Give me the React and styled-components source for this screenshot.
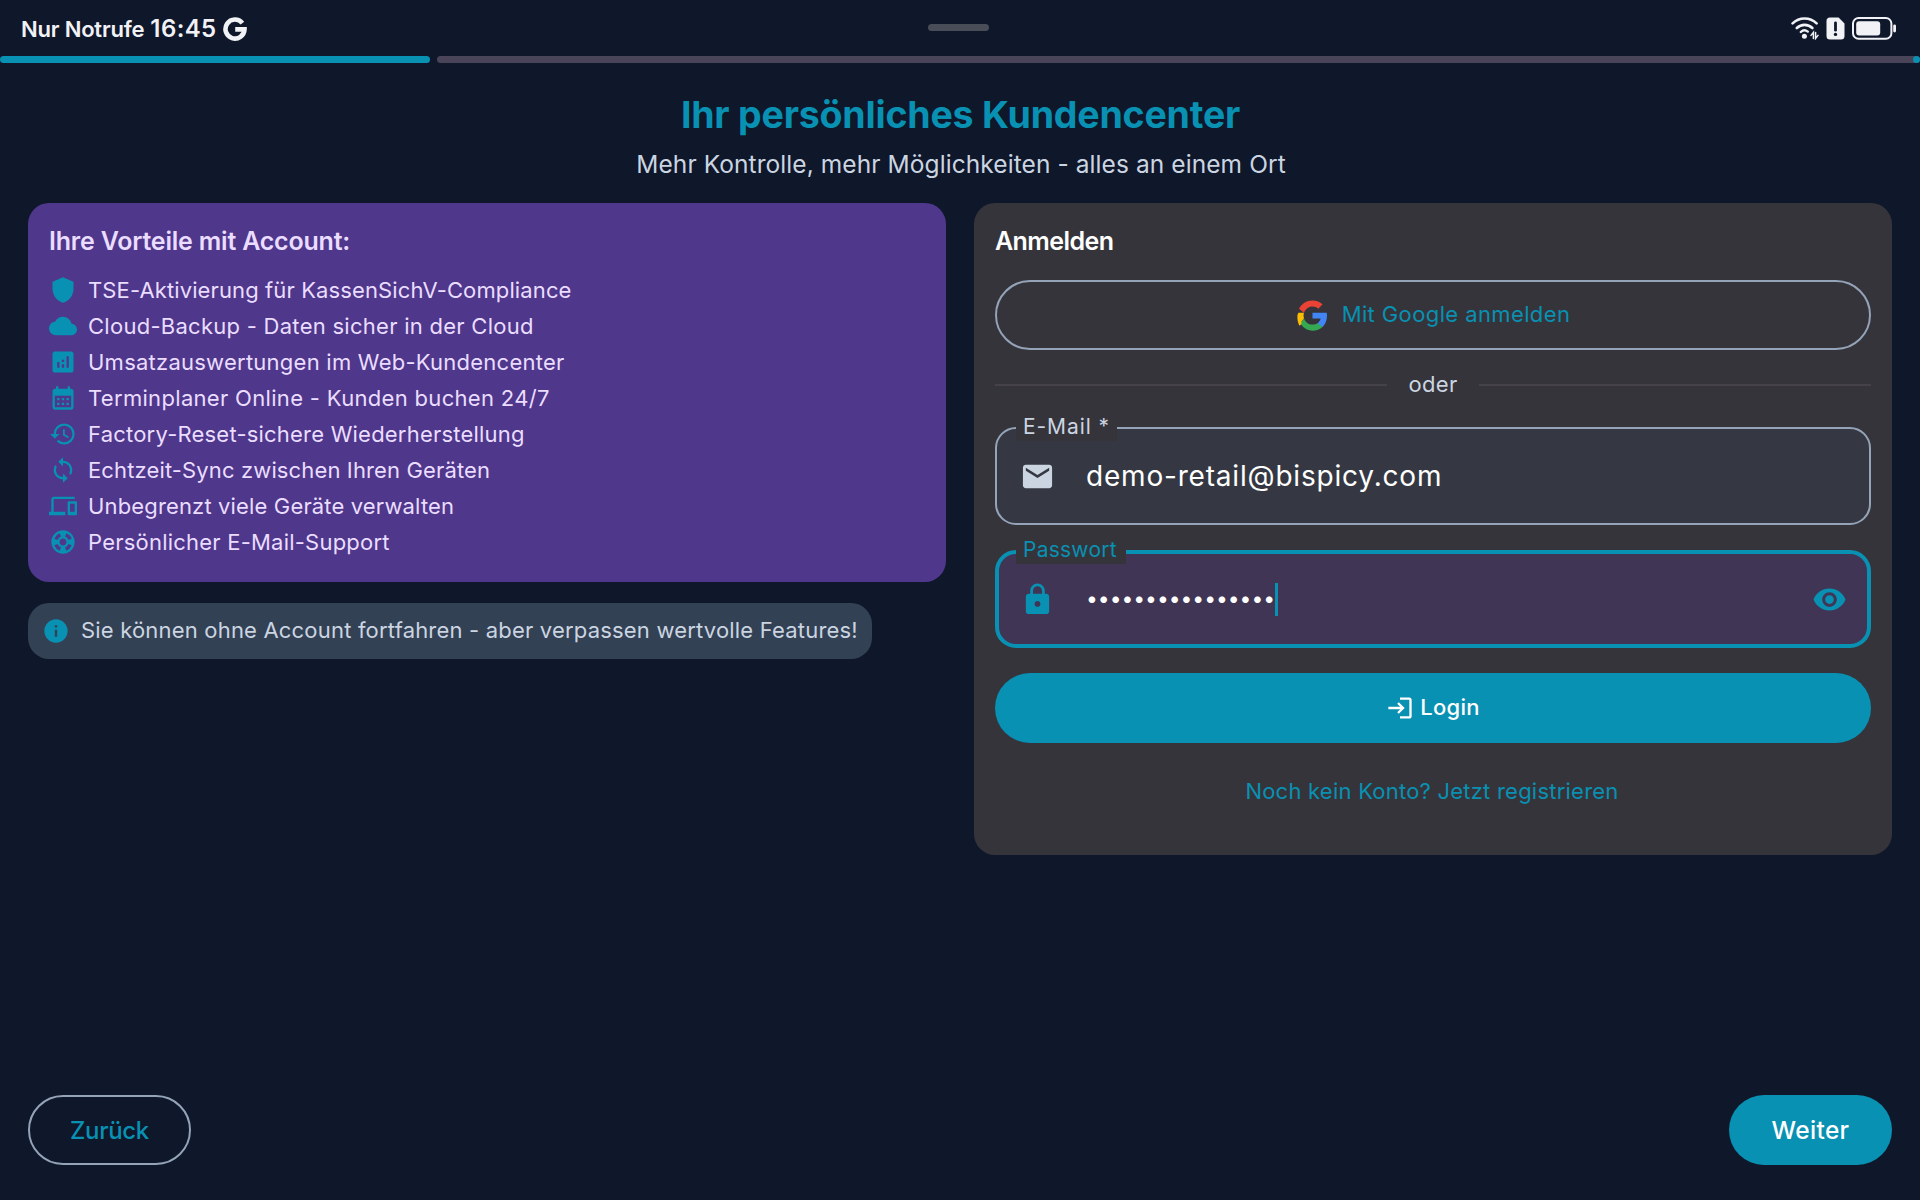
import React from "react";
import styled, { createGlobalStyle } from "styled-components";
import {
  MdShield,
  MdCloud,
  MdAnalytics,
  MdCalendarMonth,
  MdHistory,
  MdSync,
  MdDevices,
  MdSupport,
  MdInfo,
  MdEmail,
  MdLock,
  MdVisibility,
  MdLogin,
} from "react-icons/md";

const color = {
  bg: "#0f172a",
  primary: "#0891b2",
  purple: "#4f378b",
  onPurple: "#eaddff",
  card: "#36343b",
  outline: "#94a3b8",
  soft: "#cbd5e1",
  info: "#334155",
  track: "#4a4458",
};

const GlobalStyle = createGlobalStyle`
  * { box-sizing: border-box; }
  body {
    margin: 0;
    background: ${color.bg};
    font-family: Inter, "Noto Sans", sans-serif;
    -webkit-font-smoothing: antialiased;
  }
  svg { display: block; flex: none; }
`;

const Screen = styled.div`
  display: flex;
  flex-direction: column;
  height: 1200px;
  background: ${color.bg};
`;

/* Status bar */
const StatusBar = styled.header`
  display: grid;
  grid-template-columns: 1fr auto 1fr;
  align-items: center;
  height: 56px;
  padding: 0 23px 0 21px;
  color: #f1f2f6;
`;
const StatusLeft = styled.div`
  display: flex;
  align-items: center;
  gap: 6px;
  padding-top: 1px;
  font-weight: 600;
  line-height: 30px;
  white-space: nowrap;
`;
const Carrier = styled.span`
  font-size: 22px;
  letter-spacing: -0.2px;
`;
const Clock = styled.span`
  font-size: 24px;
  letter-spacing: 0.4px;
`;
const Grip = styled.div`
  width: 61px;
  height: 7px;
  margin: 0 2px 2px 0;
  border-radius: 4px;
  background: #484d57;
`;
const StatusRight = styled.div`
  display: flex;
  justify-content: flex-end;
  align-items: center;
  gap: 7px;
`;

/* Progress */
const Progress = styled.div`
  display: flex;
  gap: 7px;
  height: 7px;
`;
const ProgressDone = styled.div`
  width: 430px;
  border-radius: 4px;
  background: ${color.primary};
`;
const ProgressRest = styled.div`
  display: flex;
  justify-content: flex-end;
  flex: 1;
  border-radius: 4px;
  background: ${color.track};
`;
const ProgressStop = styled.div`
  width: 7px;
  border-radius: 50%;
  background: ${color.primary};
`;

/* Heading */
const Heading = styled.div`
  display: flex;
  flex-direction: column;
  align-items: center;
  gap: 13px;
  padding: 30px 0 23px;
`;
const Title = styled.h1`
  margin: 0;
  padding-left: 1px;
  font-size: 37.5px;
  font-weight: 650;
  line-height: 43px;
  letter-spacing: -0.2px;
  color: ${color.primary};
`;
const Subtitle = styled.p`
  margin: 0;
  padding-left: 2px;
  font-size: 24.5px;
  line-height: 31px;
  letter-spacing: 0.08px;
  color: ${color.soft};
`;

/* Columns */
const Columns = styled.main`
  display: grid;
  grid-template-columns: 1fr 1fr;
  align-items: start;
  gap: 28px;
  flex: 1;
  padding: 0 28px;
`;
const Column = styled.div`
  display: flex;
  flex-direction: column;
  align-items: flex-start;
  gap: 21px;
`;
const Card = styled.section`
  width: 100%;
  padding: ${(p) => (p.$tone === "purple" ? "22px 21px" : "22px 21px 29px")};
  border-radius: 21px;
  background: ${(p) => (p.$tone === "purple" ? color.purple : color.card)};
  color: ${(p) => (p.$tone === "purple" ? color.onPurple : "#ffffff")};
`;
const CardTitle = styled.h2`
  margin: 0;
  font-size: 25px;
  font-weight: 600;
  line-height: 33px;
  letter-spacing: ${(p) => p.$spacing};
`;
const BenefitList = styled.ul`
  margin: 14px 0 0;
  padding: 0;
  list-style: none;
`;
const Benefit = styled.li`
  display: flex;
  align-items: center;
  gap: 11px;
  height: 36px;
  font-size: 22px;
  letter-spacing: ${(p) => p.$spacing}px;
  white-space: nowrap;

  svg { color: ${color.primary}; }
`;
const InfoBox = styled.div`
  display: flex;
  align-items: center;
  gap: 11px;
  width: 844px;
  height: 56px;
  padding: 0 14px;
  border-radius: 21px;
  background: ${color.info};
  color: ${color.soft};
  font-size: 22px;
  letter-spacing: 0.19px;
  white-space: nowrap;

  svg { color: ${color.primary}; }
`;
/* Text that sits a pixel above the centre line of its icon */
const Raised = styled.span`
  padding-bottom: 2px;
`;

/* Login form */
const PillButton = styled.button`
  display: flex;
  align-items: center;
  justify-content: center;
  gap: ${(p) => p.$gap || 0}px;
  width: ${(p) => p.$width || "100%"};
  height: 70px;
  margin: ${(p) => p.$top || 0}px 0 0;
  padding: 0;
  border: ${(p) => (p.$filled ? "none" : `2px solid ${color.outline}`)};
  border-radius: 35px;
  background: ${(p) => (p.$filled ? color.primary : "transparent")};
  color: ${(p) => (p.$filled ? "#ffffff" : color.primary)};
  font-family: inherit;
  font-size: ${(p) => p.$size || 22}px;
  font-weight: ${(p) => p.$weight || 400};
  letter-spacing: ${(p) => p.$spacing || 0}px;
`;
const Divider = styled.div`
  display: flex;
  align-items: center;
  height: 28px;
  margin: 21px 0 28px;
  gap: 21px;
  font-size: 22px;
  letter-spacing: 0.33px;
  color: ${color.soft};

  &::before,
  &::after {
    content: "";
    flex: 1;
    height: 2px;
    background: #454349;
  }
`;
const Field = styled.div`
  position: relative;
  display: flex;
  align-items: center;
  height: 98px;
  margin-top: ${(p) => (p.$focused ? 25 : 0)}px;
  padding: 0 ${(p) => (p.$focused ? 20 : 22)}px;
  border: ${(p) => (p.$focused ? `4px solid ${color.primary}` : `2px solid ${color.outline}`)};
  border-radius: 21px;
  background: ${(p) => (p.$focused ? "#403554" : "#353842")};
  color: ${(p) => (p.$focused ? color.primary : color.soft)};

  > svg { margin-left: 1px; }
`;
const FieldLabel = styled.label`
  position: absolute;
  left: ${(p) => (p.$focused ? 17 : 19)}px;
  top: ${(p) => (p.$focused ? -18 : -16)}px;
  height: 28px;
  padding: 0 ${(p) => (p.$focused ? 9 : 7)}px 0 7px;
  background: ${color.card};
  color: inherit;
  font-size: 21px;
  line-height: 28px;
  letter-spacing: ${(p) => p.$spacing}px;
  white-space: nowrap;
`;
const FieldValue = styled.span`
  flex: 1;
  margin-left: 31px;
  font-size: 28px;
  line-height: 40px;
  letter-spacing: 0.81px;
  color: #ffffff;
`;
const PasswordValue = styled.span`
  display: flex;
  align-items: center;
  flex: 1;
  margin-left: 31px;
  font-size: 21px;
  line-height: 34px;
  color: #ffffff;
`;
const Caret = styled.span`
  width: 3px;
  height: 33px;
  background: ${color.primary};
`;
const RegisterLink = styled.a`
  display: flex;
  align-items: center;
  justify-content: center;
  height: 70px;
  margin-top: 13px;
  padding-right: 2px;
  font-size: 22px;
  letter-spacing: 0.23px;
  color: ${color.primary};
`;

const Footer = styled.footer`
  display: flex;
  justify-content: space-between;
  padding: 0 28px 35px;
`;

const BENEFITS = [
  [MdShield, "TSE-Aktivierung für KassenSichV-Compliance", 0.12],
  [MdCloud, "Cloud-Backup - Daten sicher in der Cloud", 0.27],
  [MdAnalytics, "Umsatzauswertungen im Web-Kundencenter", 0.243],
  [MdCalendarMonth, "Terminplaner Online - Kunden buchen 24/7", 0.318],
  [MdHistory, "Factory-Reset-sichere Wiederherstellung", 0.21],
  [MdSync, "Echtzeit-Sync zwischen Ihren Geräten", 0.134],
  [MdDevices, "Unbegrenzt viele Geräte verwalten", 0.15],
  [MdSupport, "Persönlicher E-Mail-Support", 0.22],
];

const GoogleMono = () => (
  <svg width="24" height="24" viewBox="0 0 24 24" fill="none" stroke="currentColor" strokeWidth="4.6">
    <path d="M19.4 6.1A9.5 9.5 0 1 0 21.5 12.4H12.2" />
  </svg>
);

const GoogleColor = () => (
  <svg width="33" height="33" viewBox="0 0 24 24">
    <path fill="#4285f4" d="M22.56 12.25c0-.78-.07-1.53-.2-2.25H12v4.26h5.92c-.26 1.37-1.04 2.53-2.21 3.31v2.77h3.57c2.08-1.92 3.28-4.74 3.28-8.09z" />
    <path fill="#34a853" d="M12 23c2.97 0 5.46-.98 7.28-2.66l-3.57-2.77c-.98.66-2.23 1.06-3.71 1.06-2.86 0-5.29-1.93-6.16-4.53L3.2 17.5C5 20.9 8.1 23 12 23z" />
    <path fill="#fbbc05" d="M5.84 14.09c-.22-.66-.35-1.36-.35-2.09s.13-1.43.35-2.09H1.8C1.2 10.8 1 11.6 1 13.2c0 2.2.5 4.2 1.5 6.2l1.4-1 .1-2z" />
    <path fill="#ea4335" d="M12 5.38c1.62 0 3.06.56 4.21 1.64l3.15-3.15C17.45 2.09 14.97 1 12 1 7.7 1 3.99 3.47 2.18 7.07l3.66 2.84c.87-2.6 3.3-4.53 6.16-4.53z" />
  </svg>
);

const WifiIcon = () => (
  <svg width="28" height="24" viewBox="0 0 28 24" fill="none" stroke="currentColor" strokeLinecap="round">
    <path d="M1.6 7.4a17.2 17.2 0 0 1 24 0" strokeWidth="2.6" />
    <path d="M5.8 12a11.2 11.2 0 0 1 15.6 0" strokeWidth="2.6" />
    <path d="M9.8 16a5.4 5.4 0 0 1 7 -.4" strokeWidth="2.4" />
    <circle cx="13.4" cy="20.3" r="2.5" fill="currentColor" stroke="none" />
    <path d="M22.4 22.4v-6l-2.4 3M24.6 16.4v6l2.4-3" strokeWidth="1.5" />
  </svg>
);

const SimAlertIcon = () => (
  <svg width="19" height="23" viewBox="0 0 19 23">
    <path fill="currentColor" d="M4 0.5h8.6L18.5 6.4V19a3.5 3.5 0 0 1-3.5 3.5H4A3.5 3.5 0 0 1 .5 19V4A3.5 3.5 0 0 1 4 .5z" />
    <path d="M9.5 5.8v7.4" stroke={color.bg} strokeWidth="2.8" strokeLinecap="round" />
    <circle cx="9.5" cy="17.4" r="1.7" fill={color.bg} />
  </svg>
);

const BatteryIcon = () => (
  <svg width="45" height="23" viewBox="0 0 45 23">
    <rect x="1" y="1" width="38.4" height="20.8" rx="5.6" fill="none" stroke="currentColor" strokeWidth="2" />
    <rect x="4.2" y="4.2" width="24" height="14.4" rx="3" fill="currentColor" />
    <rect x="41.2" y="7.4" width="2.8" height="8" rx="1.4" fill="currentColor" />
  </svg>
);

export default function App() {
  return (
    <Screen>
      <GlobalStyle />
      <StatusBar>
        <StatusLeft>
          <Carrier>Nur Notrufe</Carrier>
          <Clock>16:45</Clock>
          <GoogleMono />
        </StatusLeft>
        <Grip />
        <StatusRight>
          <WifiIcon />
          <SimAlertIcon />
          <BatteryIcon />
        </StatusRight>
      </StatusBar>

      <Progress>
        <ProgressDone />
        <ProgressRest>
          <ProgressStop />
        </ProgressRest>
      </Progress>

      <Heading>
        <Title>Ihr persönliches Kundencenter</Title>
        <Subtitle>Mehr Kontrolle, mehr Möglichkeiten - alles an einem Ort</Subtitle>
      </Heading>

      <Columns>
        <Column>
          <Card $tone="purple">
            <CardTitle $spacing="-0.2px">Ihre Vorteile mit Account:</CardTitle>
            <BenefitList>
              {BENEFITS.map(([Icon, text, spacing]) => (
                <Benefit key={text} $spacing={spacing}>
                  <Icon size={28} />
                  {text}
                </Benefit>
              ))}
            </BenefitList>
          </Card>
          <InfoBox>
            <MdInfo size={28} />
            <Raised>Sie können ohne Account fortfahren - aber verpassen wertvolle Features!</Raised>
          </InfoBox>
        </Column>

        <Card>
          <CardTitle $spacing="-0.57px">Anmelden</CardTitle>
          <PillButton $top={22} $gap={13} $spacing={0.39}>
            <GoogleColor />
            <Raised>Mit Google anmelden</Raised>
          </PillButton>
          <Divider>
            <Raised>oder</Raised>
          </Divider>
          <Field>
            <FieldLabel $spacing={0.9}>E-Mail *</FieldLabel>
            <MdEmail size={35} />
            <FieldValue>demo-retail@bispicy.com</FieldValue>
          </Field>
          <Field $focused>
            <FieldLabel $focused $spacing={0.25}>Passwort</FieldLabel>
            <MdLock size={35} />
            <PasswordValue>
              ••••••••••••••••
              <Caret />
            </PasswordValue>
            <MdVisibility size={35} />
          </Field>
          <PillButton $filled $top={25} $gap={6} $weight={450} $spacing={0.27}>
            <MdLogin size={28} />
            <Raised>Login</Raised>
          </PillButton>
          <RegisterLink>Noch kein Konto? Jetzt registrieren</RegisterLink>
        </Card>
      </Columns>

      <Footer>
        <PillButton $width="163px" $size={24} $weight={450} $spacing={-0.3}>Zurück</PillButton>
        <PillButton $filled $width="163px" $size={24.5} $weight={500} $spacing={0.32}>Weiter</PillButton>
      </Footer>
    </Screen>
  );
}
